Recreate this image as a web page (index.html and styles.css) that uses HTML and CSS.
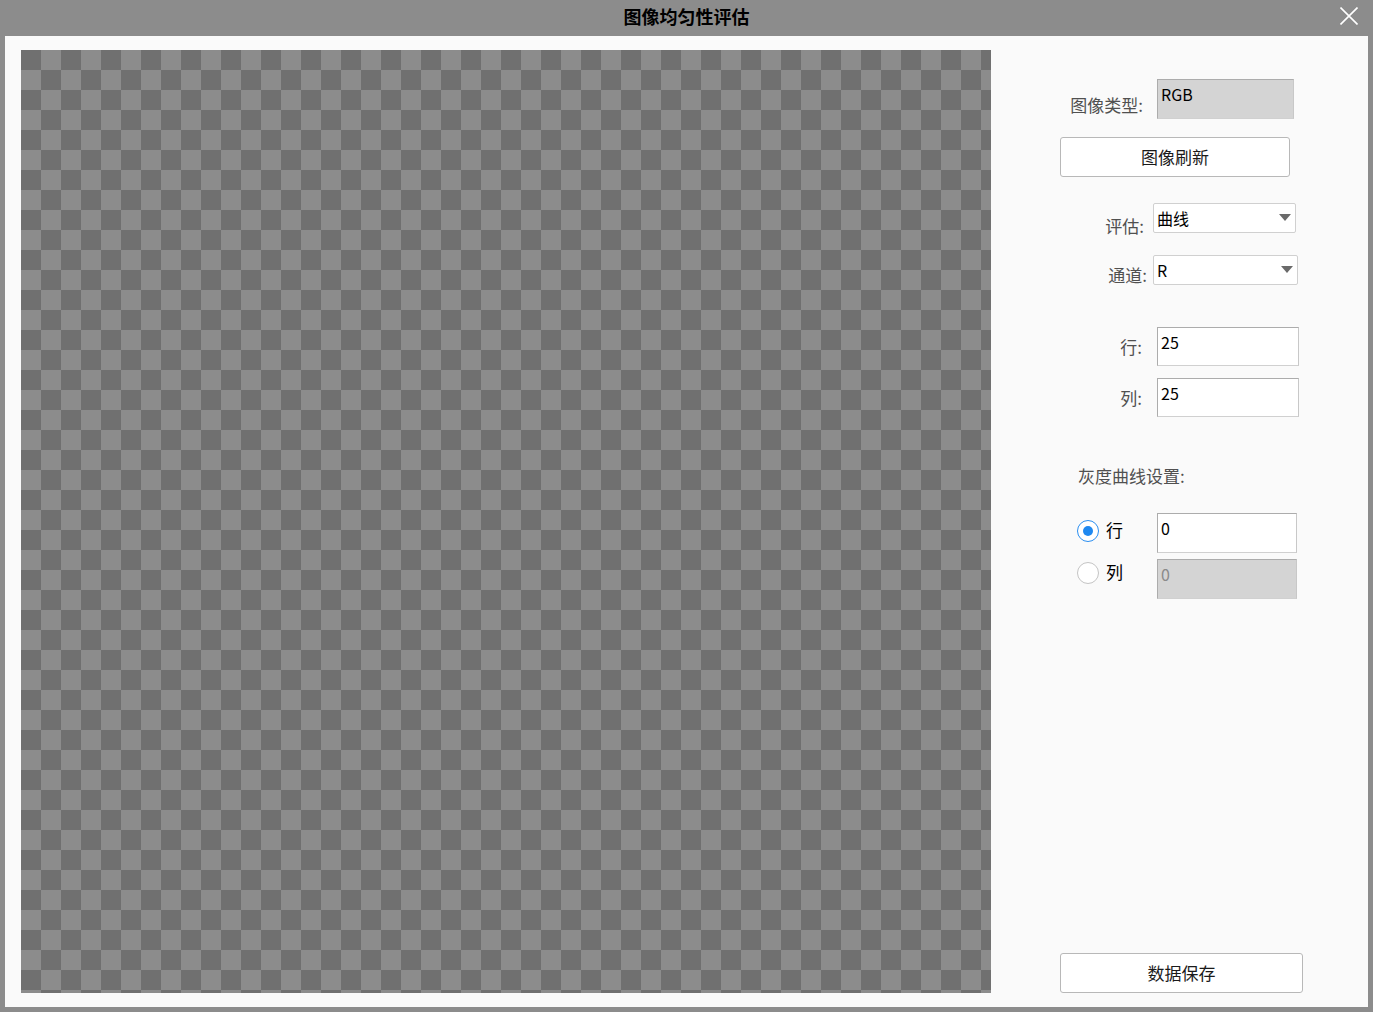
FILE: index.html
```html
<!DOCTYPE html>
<html lang="zh-CN">
<head>
<meta charset="utf-8">
<title>图像均匀性评估</title>
<link rel="stylesheet" href="styles.css">
</head>
<body>
<div class="titlebar">
  <div></div>
  <div class="title">图像均匀性评估</div>
  <div class="close-wrap">
    <svg class="close" width="18" height="18" viewBox="0 0 18 18"><path d="M0.5 0.5 L17.5 17.5 M17.5 0.5 L0.5 17.5" stroke="#ffffff" stroke-width="1.6" fill="none"/></svg>
  </div>
</div>
<div class="window">
  <div class="canvas"></div>
  <div class="panel">
    <div class="row row-type">
      <div class="label l-type">图像类型:</div>
      <div class="field disabled w137 h40">RGB</div>
    </div>
    <button class="btn btn-refresh">图像刷新</button>
    <div class="row row-eval">
      <div class="label l-eval">评估:</div>
      <div class="combo w143"><span>曲线</span><span class="arrow"></span></div>
    </div>
    <div class="row row-chan">
      <div class="label l-chan">通道:</div>
      <div class="combo w145"><span>R</span><span class="arrow"></span></div>
    </div>
    <div class="row row-rows">
      <div class="label l-num">行:</div>
      <div class="field w142 h39">25</div>
    </div>
    <div class="row row-cols">
      <div class="label l-num">列:</div>
      <div class="field w142 h39">25</div>
    </div>
    <div class="section">灰度曲线设置:</div>
    <div class="row row-r1">
      <div class="radio-item">
        <span class="radio checked"></span><span class="rlabel">行</span>
      </div>
      <div class="field w140 h40">0</div>
    </div>
    <div class="row row-r2">
      <div class="radio-item">
        <span class="radio"></span><span class="rlabel">列</span>
      </div>
      <div class="field disabled dim w140 h40">0</div>
    </div>
    <button class="btn btn-save">数据保存</button>
  </div>
</div>
</body>
</html>
```
FILE: styles.css
```css
* { box-sizing: border-box; }
html, body {
  margin: 0;
  padding: 0;
  width: 1373px;
  height: 1012px;
  overflow: hidden;
  background: #8c8c8c;
  font-family: "Noto Sans CJK SC", "Noto Sans", sans-serif;
}
.titlebar {
  height: 36px;
  display: grid;
  grid-template-columns: 1fr auto 1fr;
  align-items: center;
}
.title {
  font-size: 18px;
  font-weight: bold;
  color: #000;
  line-height: 24px;
  padding-left: 0;
  margin-top: -4px;
}
.close-wrap {
  display: flex;
  justify-content: flex-end;
  padding-right: 15px;
}
.close { display: block; margin-top: -4px; }
.window {
  margin: 0 5px;
  height: 971px;
  background: #fafafa;
  display: flex;
  padding: 14px 0 0 16px;
}
.canvas {
  width: 970px;
  height: 943px;
  flex: none;
  background-color: #8c8c8c;
  background-image: conic-gradient(#8c8c8c 25%, #707070 0 50%, #8c8c8c 0 75%, #707070 0);
  background-size: 40px 40px;
}
.panel {
  flex: 1;
  height: 943px;
  display: flex;
  flex-direction: column;
  padding: 29px 0 0 69px;
}
.row {
  display: flex;
  align-items: flex-start;
  flex: none;
}
.label {
  font-size: 17px;
  line-height: 24px;
  color: #505050;
  text-align: right;
  flex: none;
}
.l-type { width: 97px; padding-right: 14px; margin-top: 14px; }
.l-eval { width: 93px; padding-right: 9px; margin-top: 11px; }
.l-chan { width: 93px; padding-right: 6px; margin-top: 8px; }
.l-num { width: 97px; padding-right: 15px; margin-top: 8px; }
.field {
  background: #fff;
  border: 1px solid #acacac;
  border-bottom-color: #d0d0d0;
  border-right-color: #c8c8c8;
  font-size: 16px;
  line-height: 24px;
  color: #000;
  padding: 2px 0 0 3px;
  flex: none;
}
.field.disabled { background: #d4d4d4; }
.field.dim { color: #8a8a8a; }
.w137 { width: 137px; }
.w140 { width: 140px; }
.w142 { width: 142px; }
.w143 { width: 143px; }
.w145 { width: 145px; }
.h39 { height: 39px; }
.h40 { height: 40px; }
.combo {
  height: 30px;
  background: #fff;
  border: 1px solid #d0d0d0;
  border-radius: 2px;
  display: flex;
  align-items: center;
  justify-content: space-between;
  padding: 0 4px 0 3px;
  font-size: 16px;
  color: #000;
  line-height: 24px;
  flex: none;
}
.arrow {
  width: 0;
  height: 0;
  border-left: 6.5px solid transparent;
  border-right: 6.5px solid transparent;
  border-top: 7px solid #6a6a6a;
  margin-top: -2px;
}
.btn {
  display: block;
  flex: none;
  height: 40px;
  background: #fff;
  border: 1px solid #b8b8b8;
  border-radius: 3px;
  font-family: inherit;
  font-size: 17px;
  color: #1a1a1a;
  padding: 0;
  line-height: 24px;
}
.btn-refresh { width: 230px; margin-top: 18px; }
.btn-save { width: 243px; margin-top: auto; }
.row-type { height: 40px; }
.row-eval { margin-top: 26px; height: 30px; }
.row-chan { margin-top: 22px; height: 30px; }
.row-rows { margin-top: 42px; height: 39px; }
.row-cols { margin-top: 12px; height: 39px; }
.section {
  font-size: 17px;
  line-height: 24px;
  color: #505050;
  margin-top: 47px;
  padding-left: 18px;
  flex: none;
}
.row-r1 { margin-top: 25px; height: 40px; }
.row-r2 { margin-top: 6px; height: 40px; }
.radio-item {
  width: 97px;
  flex: none;
  display: flex;
  align-items: flex-start;
  padding-left: 17px;
}
.radio {
  width: 22px;
  height: 22px;
  border-radius: 50%;
  border: 1.5px solid #c4c4c4;
  background: #fff;
  flex: none;
  display: flex;
  align-items: center;
  justify-content: center;
}
.radio.checked { border-color: #2a8ef0; }
.radio.checked::after {
  content: "";
  width: 10px;
  height: 10px;
  border-radius: 50%;
  background: #1e88f0;
}
.row-r1 .radio { margin-top: 7px; }
.row-r2 .radio { margin-top: 3px; }
.rlabel {
  font-size: 17px;
  line-height: 24px;
  color: #000;
  margin-left: 7px;
}
.row-r1 .rlabel { margin-top: 5px; }
.row-r2 .rlabel { margin-top: 1px; }
```
